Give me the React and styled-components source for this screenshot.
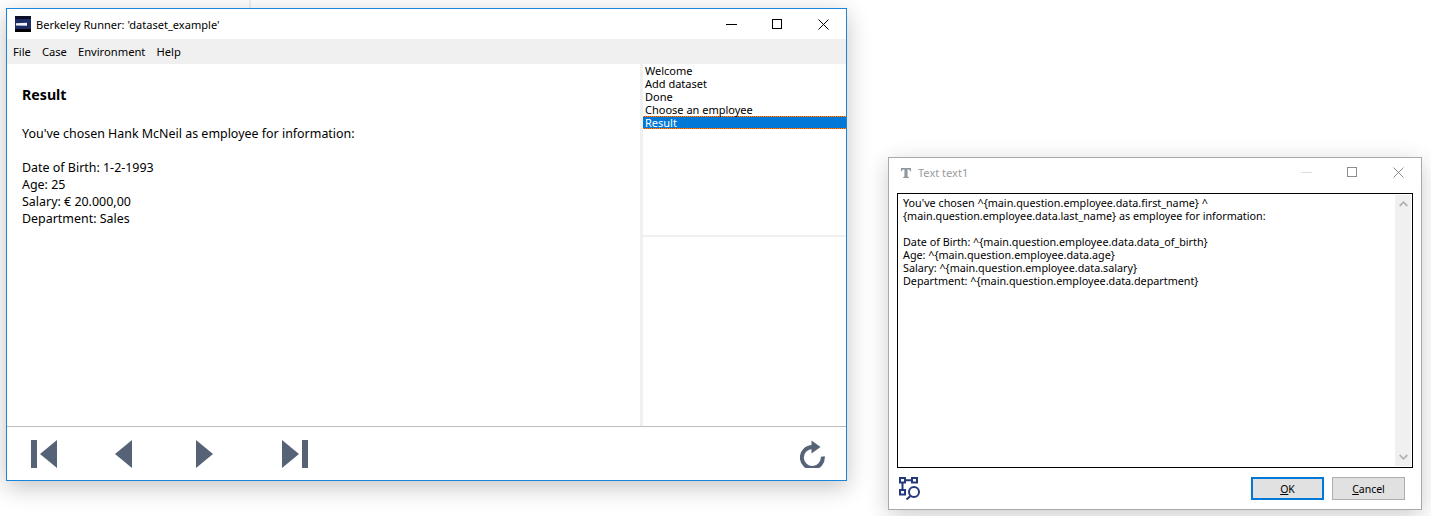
import React from "react";
import styled, { createGlobalStyle } from "styled-components";

const Global = createGlobalStyle`
  html, body { margin: 0; padding: 0; background: #fff; overflow: hidden; }
  body { font-family: "Noto Sans", "Liberation Sans", sans-serif; color: #000; }
`;

const Desktop = styled.div`
  position: relative;
  width: 1431px;
  height: 516px;
  overflow: hidden;
  background: #fff;
`;
const BackLine = styled.div`
  position: absolute;
  left: 249px;
  top: 0;
  width: 2px;
  height: 8px;
  background: #f0f0f0;
`;
const Window = styled.div`
  position: absolute;
  box-sizing: border-box;
  display: flex;
  flex-direction: column;
  background: #fff;
`;
const MainWindow = styled(Window)`
  left: 6px;
  top: 8px;
  width: 841px;
  height: 473px;
  border: 1px solid #1a86d9;
  box-shadow: 0 6px 22px rgba(0, 0, 0, 0.24);
`;
const DialogWindow = styled(Window)`
  left: 888px;
  top: 157px;
  width: 534px;
  height: 353px;
  border: 1px solid #a9a9a9;
  box-shadow: 0 6px 22px rgba(0, 0, 0, 0.2);
`;
const TitleBar = styled.div`
  flex: none;
  height: 30px;
  display: flex;
  align-items: center;
  padding-left: 8px;
`;
const DialogTitleBar = styled(TitleBar)`
  height: 29px;
  padding-left: 12px;
`;
const TitleText = styled.span`
  margin-left: ${(p) => (p.$dim ? 7 : 5)}px;
  font-size: 11.05px;
  color: ${(p) => (p.$dim ? "#9a9a9a" : "#000")};
  white-space: nowrap;
`;
const Controls = styled.div`
  margin-left: auto;
  display: flex;
  height: 100%;
`;
const Control = styled.div`
  width: 46px;
  display: flex;
  align-items: center;
  justify-content: center;
`;
const MenuBar = styled.div`
  flex: none;
  height: 25px;
  background: #f0f0f0;
  display: flex;
  align-items: center;
  padding-left: 6px;
  gap: 11px;
  font-size: 11.2px;
`;
const Body = styled.div`
  flex: 1;
  min-height: 0;
  display: flex;
`;
const Content = styled.div`
  flex: 1;
  padding: 22px 15px;
  font-size: 12.45px;
  line-height: 17px;
`;
const Heading = styled.div`
  font-size: 14.2px;
  font-weight: 700;
  line-height: 18px;
  margin-bottom: 21px;
`;
const Para = styled.div`
  margin-bottom: 17px;
`;
const Side = styled.div`
  flex: none;
  width: 206px;
  box-sizing: border-box;
  border-left: 3px solid #f0f0f0;
  display: flex;
  flex-direction: column;
`;
const StepList = styled.div`
  flex: none;
  height: 173px;
  border-bottom: 2px solid #f0f0f0;
  box-sizing: border-box;
  font-size: 11px;
`;
const Step = styled.div`
  height: 13px;
  line-height: 13px;
  padding-left: 2px;
  box-sizing: border-box;
  white-space: nowrap;
  ${(p) =>
    p.$active &&
    `color:#fff;
     background:
       repeating-linear-gradient(90deg,#ff8728 0 1px,#9a5a24 1px 2px) top/100% 1px no-repeat,
       repeating-linear-gradient(90deg,#ff8728 0 1px,#9a5a24 1px 2px) bottom/100% 1px no-repeat,
       #0078d7;`}
`;
const Footer = styled.div`
  flex: none;
  height: 54px;
  box-sizing: border-box;
  border-top: 1px solid #bdbdbd;
  display: flex;
  align-items: center;
  padding: 0 21px 0 24px;
`;
const NavButton = styled.div`
  display: flex;
  margin-right: ${(p) => p.$gap}px;
`;
const Reload = styled.div`
  margin-left: auto;
  display: flex;
`;
const DialogBody = styled.div`
  flex: 1;
  min-height: 0;
  display: flex;
  flex-direction: column;
  padding: 6px 8px 8px 8px;
`;
const TextArea = styled.div`
  flex: 1;
  min-height: 0;
  border: 1px solid #000;
  display: flex;
`;
const TextBody = styled.div`
  flex: 1;
  padding: 2px 5px;
  font-size: 10.78px;
  line-height: 13px;
  white-space: pre-wrap;
`;
const ScrollBar = styled.div`
  flex: none;
  width: 16px;
  margin: 1px;
  background: #f0f0f0;
  display: flex;
  flex-direction: column;
  justify-content: space-between;
  align-items: center;
  padding: 6px 0;
  box-sizing: border-box;
`;
const DialogFooter = styled.div`
  flex: none;
  height: 33px;
  display: flex;
  align-items: flex-end;
  padding-right: 8px;
`;
const Tool = styled.div`
  display: flex;
  margin: 0 auto 1px 2px;
`;
const Button = styled.div`
  width: 73px;
  height: 23px;
  box-sizing: border-box;
  margin-left: 8px;
  background: #e1e1e1;
  border: ${(p) => (p.$primary ? "2px solid #0078d7" : "1px solid #adadad")};
  display: flex;
  align-items: center;
  justify-content: center;
  font-size: 10.5px;
  margin-bottom: 1px;
`;
const Key = styled.span`
  text-decoration: underline;
`;

const Minimize = ({ c = "#000" }) => (
  <svg width="11" height="11" viewBox="0 0 11 11"><path d="M0 5.5h11" stroke={c} fill="none" /></svg>
);
const Maximize = ({ c = "#000" }) => (
  <svg width="11" height="11" viewBox="0 0 11 11"><rect x=".5" y=".5" width="9" height="9" stroke={c} fill="none" /></svg>
);
const Close = ({ c = "#000" }) => (
  <svg width="11" height="11" viewBox="0 0 11 11"><path d="M.5.5l10 10M10.5.5l-10 10" stroke={c} fill="none" /></svg>
);
const Logo = () => (
  <svg width="16" height="16" viewBox="0 0 16 16">
    <rect width="16" height="16" fill="#000" />
    <rect y="0" width="16" height="3" fill="#0b1026" />
    <rect y="3" width="16" height="10" fill="#1c2c66" />
    <path d="M1 7.200L12 6.800v3L1 9.500z" fill="#f2f4fa" />
    <rect y="13" width="16" height="3" fill="#000" />
  </svg>
);
const NAV = "#566377";
const First = () => (
  <svg width="26" height="28" viewBox="0 0 26 28" fill={NAV}><path d="M0 0h6v28H0zM26 0v28L9 14z" /></svg>
);
const Prev = () => (
  <svg width="17" height="28" viewBox="0 0 17 28" fill={NAV}><path d="M17 0v28L0 14z" /></svg>
);
const Next = () => (
  <svg width="17" height="28" viewBox="0 0 17 28" fill={NAV}><path d="M0 0v28l17-14z" /></svg>
);
const Last = () => (
  <svg width="26" height="28" viewBox="0 0 26 28" fill={NAV}><path d="M20 0h6v28h-6zM0 0v28l17-14z" /></svg>
);
const ReloadIcon = () => (
  <svg width="25" height="28" viewBox="0 0 25 28">
    <path d="M22.800 16.500A10.500 10.500 0 1 1 12.500 7" fill="none" stroke={NAV} strokeWidth="4" />
    <path d="M11.500 0.500l9 6.500-9 6.500z" fill={NAV} />
  </svg>
);
const TIcon = () => (
  <svg width="10" height="10" viewBox="0 0 14 14" fill="#8f989e">
    <path d="M0 0h14v5h-1c-.3-1.800-1-3-3-3h-.8v9.500c0 .7.6 1.200 1.800 1.200V14H3v-1.300c1.200 0 1.800-.5 1.800-1.200V2H4C2 2 1.300 3.200 1 5H0z" />
  </svg>
);
const Chevron = ({ up }) => (
  <svg width="9" height="6" viewBox="0 0 9 6">
    <path d={up ? "M.7 5L4.500 1.200 8.300 5" : "M.7 1L4.500 4.800 8.300 1"} fill="none" stroke="#b4b4b4" strokeWidth="1.800" />
  </svg>
);
const InspectIcon = () => (
  <svg width="22" height="23" viewBox="0 0 22 23" fill="none" stroke="#24397c" strokeWidth="2">
    <rect x="1" y="1" width="5" height="4.500" />
    <rect x="13" y="1" width="5" height="4.500" />
    <rect x="1" y="13" width="5" height="4.500" />
    <path d="M6 3.200h7M3.500 5.500V13" />
    <circle cx="15" cy="15" r="5" />
    <path d="M11.500 19L7.500 22.500" />
  </svg>
);

const STEPS = ["Welcome", "Add dataset", "Done", "Choose an employee", "Result"];

export default function App() {
  return (
    <Desktop>
      <Global />
      <BackLine />
      <MainWindow>
        <TitleBar>
          <Logo />
          <TitleText>Berkeley Runner: 'dataset_example'</TitleText>
          <Controls>
            <Control><Minimize /></Control>
            <Control><Maximize /></Control>
            <Control><Close /></Control>
          </Controls>
        </TitleBar>
        <MenuBar>
          <span>File</span>
          <span>Case</span>
          <span>Environment</span>
          <span>Help</span>
        </MenuBar>
        <Body>
          <Content>
            <Heading>Result</Heading>
            <Para>You've chosen Hank McNeil as employee for information:</Para>
            <div>Date of Birth: 1-2-1993</div>
            <div>Age: 25</div>
            <div>Salary: € 20.000,00</div>
            <div>Department: Sales</div>
          </Content>
          <Side>
            <StepList>
              {STEPS.map((s, i) => (
                <Step key={s} $active={i === 4}>{s}</Step>
              ))}
            </StepList>
          </Side>
        </Body>
        <Footer>
          <NavButton $gap={58}><First /></NavButton>
          <NavButton $gap={64}><Prev /></NavButton>
          <NavButton $gap={69}><Next /></NavButton>
          <NavButton $gap={0}><Last /></NavButton>
          <Reload><ReloadIcon /></Reload>
        </Footer>
      </MainWindow>
      <DialogWindow>
        <DialogTitleBar>
          <TIcon />
          <TitleText $dim>Text text1</TitleText>
          <Controls>
            <Control><Minimize c="#dcdcdc" /></Control>
            <Control><Maximize c="#8c8c8c" /></Control>
            <Control><Close c="#8c8c8c" /></Control>
          </Controls>
        </DialogTitleBar>
        <DialogBody>
          <TextArea>
            <TextBody>{`You've chosen ^{main.question.employee.data.first_name} ^
{main.question.employee.data.last_name} as employee for information:

Date of Birth: ^{main.question.employee.data.data_of_birth}
Age: ^{main.question.employee.data.age}
Salary: ^{main.question.employee.data.salary}
Department: ^{main.question.employee.data.department}`}</TextBody>
            <ScrollBar>
              <Chevron up />
              <Chevron />
            </ScrollBar>
          </TextArea>
          <DialogFooter>
            <Tool><InspectIcon /></Tool>
            <Button $primary><span><Key>O</Key>K</span></Button>
            <Button><span><Key>C</Key>ancel</span></Button>
          </DialogFooter>
        </DialogBody>
      </DialogWindow>
    </Desktop>
  );
}
